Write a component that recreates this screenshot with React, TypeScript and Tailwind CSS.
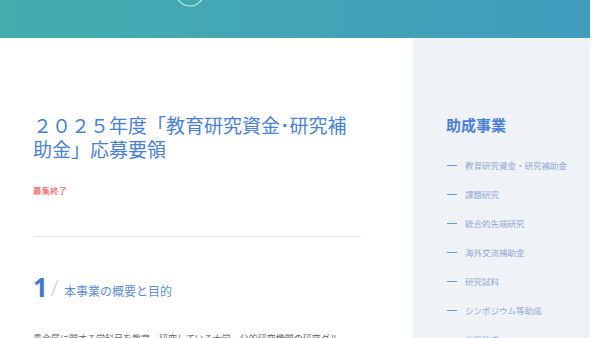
import React from 'react';

const MENU = [
  '教育研究資金・研究補助金',
  '課題研究',
  '統合的先端研究',
  '海外交流補助金',
  '研究試料',
  'シンポジウム等助成',
  '出版助成',
];

const FONT = { fontFamily: '"Noto Sans CJK JP", "Noto Sans", sans-serif' };

export default function App() {
  return (
    <div className="w-[600px] h-[338px] overflow-hidden bg-white" style={FONT}>
      <div className="w-[590px]">
        {/* Header */}
        <header className="relative h-[38px] bg-gradient-to-r from-[#44adae] to-[#409cbd] overflow-hidden">
          <svg className="absolute left-[175px] top-[-23px]" width="30" height="30" viewBox="0 0 30 30">
            <circle cx="15" cy="15" r="14" fill="none" stroke="rgba(255,255,255,0.75)" strokeWidth="1.2" />
          </svg>
        </header>

        <div className="flex">
          {/* Main */}
          <main className="w-[413px] pl-[33px] pt-[75px]">
            <div className="w-[328px]">
              <h1 className="text-[19px] leading-[24px] text-[#4a80d6] font-normal">
                ２０２５年度「教育研究資金･研究補助金」応募要領
              </h1>
              <p className="mt-[23px] text-[8.5px] leading-[12px] text-[#f04848]">募集終了</p>
              <div className="mt-[40px] h-px bg-[#dde5ee]" />
              <div className="mt-[37px] flex items-end">
                <span className="text-[26px] leading-[26px] font-bold text-[#3f7acf]" style={{ fontFamily: '"Noto Sans", sans-serif' }}>
                  1
                </span>
                <span className="ml-[3px] text-[22px] leading-[26px] font-thin text-[#7fa5e0]" style={{ fontFamily: '"Noto Sans", sans-serif' }}>
                  /
                </span>
                <span className="ml-[6px] mb-[1px] text-[12px] leading-[16px] text-[#5e8dd6]">本事業の概要と目的</span>
              </div>
              <p className="mt-[31px] text-[9px] leading-[16px] text-[#666]">
                <span className="whitespace-nowrap">貴金属に関する学科目を教育・研究している大学・公的研究機関の研究グルー</span>
                <br />
                プ又は研究者に対し、研究資金を助成します。
              </p>
            </div>
          </main>

          {/* Sidebar */}
          <aside className="w-[177px] h-[300px] bg-[#eff3f7] pl-[33px] pt-[77px]">
            <h2 className="text-[15px] leading-[20px] font-bold text-[#4a80d6]">助成事業</h2>
            <ul className="mt-[22px] flex flex-col gap-[13px]">
              {MENU.map(item => (
                <li key={item} className="flex items-center h-[16px] text-[8.5px] text-[#8fa6d2]">
                  <span className="w-[10px] h-px bg-[#6b96da] ml-[1px]" />
                  <span className="ml-[8px] whitespace-nowrap">{item}</span>
                </li>
              ))}
            </ul>
          </aside>
        </div>
      </div>
    </div>
  );
}
